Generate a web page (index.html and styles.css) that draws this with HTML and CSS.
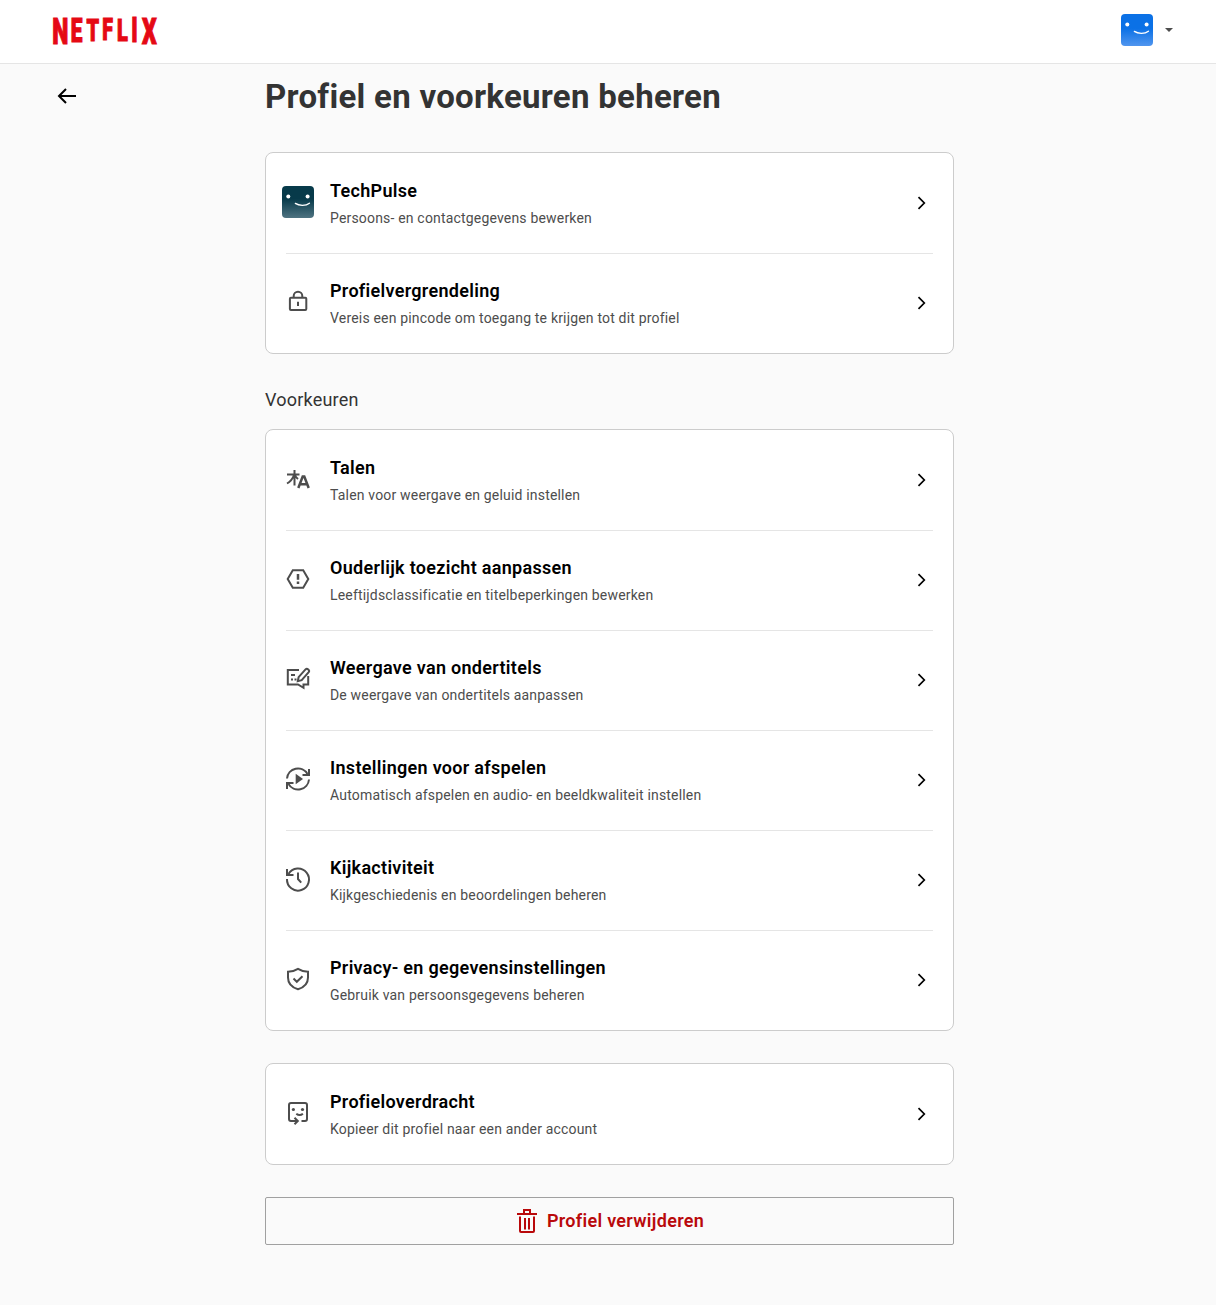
FILE: index.html
```html
<!DOCTYPE html>
<html lang="nl">
<head>
    <meta charset="UTF-8">
    <meta name="viewport" content="width=device-width, initial-scale=1.0">
    <title>Profiel en voorkeuren beheren</title>
    <link rel="stylesheet" href="styles.css">
</head>
<body>

<svg class="sprite" aria-hidden="true">
    <symbol id="chevron" viewBox="0 0 24 24">
        <path d="M9.5 6.2l5.8 5.8-5.8 5.8"/>
    </symbol>
    <symbol id="face" viewBox="0 0 32 32">
        <circle cx="6.3" cy="10.6" r="2" fill="#fff" stroke="none"/>
        <circle cx="25.6" cy="10.6" r="2" fill="#fff" stroke="none"/>
        <path d="M13.4 17.4c3.6 2.6 10.6 2.6 14-.2" fill="none" stroke="#fff" stroke-width="1.4" stroke-linecap="round"/>
    </symbol>
</svg>

<header class="header">
    <a class="logo" href="#" aria-label="Netflix">
        <svg width="106" height="30" viewBox="0 0 106 30">
            <text class="logo-text" transform="scale(.62 1)">
                <tspan x="0.6" y="28.2" font-size="37">N</tspan><tspan x="30.3" y="25.8" font-size="33.6">E</tspan><tspan x="55.5" y="24.7" font-size="32.2">T</tspan><tspan x="81.2" y="24.2" font-size="31.5">F</tspan><tspan x="105" y="24.7" font-size="32.2">L</tspan><tspan x="127.8" y="26.2" font-size="34.3">I</tspan><tspan x="145" y="28.2" font-size="37">X</tspan>
            </text>
        </svg>
    </a>
    <div class="account">
        <svg class="avatar avatar-blue"><use href="#face"/></svg>
        <span class="caret"></span>
    </div>
</header>

<main class="page">
    <a class="back" href="#" aria-label="Terug">
        <svg width="24" height="24" viewBox="0 0 24 24"><path d="M21 12H4M11 5l-7 7 7 7"/></svg>
    </a>

    <div class="content">
        <h1>Profiel en voorkeuren beheren</h1>

        <ul class="card">
            <li><a class="row" href="#">
                <svg class="avatar avatar-teal"><use href="#face"/></svg>
                <div class="text">
                    <h3>TechPulse</h3>
                    <p>Persoons- en contactgegevens bewerken</p>
                </div>
                <svg class="chevron"><use href="#chevron"/></svg>
            </a></li>
            <li><a class="row" href="#">
                <svg class="icon" viewBox="0 0 24 24">
                    <rect x="3.9" y="7.7" width="16.4" height="12.2" rx="1"/>
                    <path d="M7.7 7.7V6a4.3 4.3 0 0 1 8.6 0v1.7M12 11.7v4.4"/>
                </svg>
                <div class="text">
                    <h3>Profielvergrendeling</h3>
                    <p>Vereis een pincode om toegang te krijgen tot dit profiel</p>
                </div>
                <svg class="chevron"><use href="#chevron"/></svg>
            </a></li>
        </ul>

        <h2>Voorkeuren</h2>

        <ul class="card">
            <li><a class="row" href="#">
                <svg class="icon" viewBox="0 0 24 24">
                    <path d="M1 7.5h12.5M8.5 3v15.5M8 8c-1.2 3.6-3.6 6.6-7 8.5M9 8c.6 1.600 1.500 2.800 3 4"/>
                    <path d="M12.3 21l4.4-11.5h1.6L22.7 21M14 17.3h7" stroke-width="2.500"/>
                </svg>
                <div class="text">
                    <h3>Talen</h3>
                    <p>Talen voor weergave en geluid instellen</p>
                </div>
                <svg class="chevron"><use href="#chevron"/></svg>
            </a></li>
            <li><a class="row" href="#">
                <svg class="icon" viewBox="0 0 24 24">
                    <path d="M6.8 3.2h10.4L22.300 12l-5.1 8.800H6.800L1.700 12z"/>
                    <path d="M12 7v5.8M12 14.6V17" stroke-width="2.5"/>
                </svg>
                <div class="text">
                    <h3>Ouderlijk toezicht aanpassen</h3>
                    <p>Leeftijdsclassificatie en titelbeperkingen bewerken</p>
                </div>
                <svg class="chevron"><use href="#chevron"/></svg>
            </a></li>
            <li><a class="row" href="#">
                <svg class="icon" viewBox="0 0 24 24">
                    <path d="M13 3H1.800v14.500H12l5.500 3.300v-3.300h4.700V9"/>
                    <path d="M5 8h4M5 12.500h2M8.500 12.500h2"/>
                    <path d="M11.800 14.200l.8-4 6.900-7.800c1.700-1.600 4.600.9 3.200 2.800l-7 7.900z"/>
                </svg>
                <div class="text">
                    <h3>Weergave van ondertitels</h3>
                    <p>De weergave van ondertitels aanpassen</p>
                </div>
                <svg class="chevron"><use href="#chevron"/></svg>
            </a></li>
            <li><a class="row" href="#">
                <svg class="icon" viewBox="0 0 24 24">
                    <path d="M1 11.500A11 11 0 0 1 21.500 7M23 12.500A11 11 0 0 1 2.500 17"/>
                    <path d="M23 2v6h-6.500M1 22v-6h6.500"/>
                    <path class="solid" d="M9.700 6.800v10.400l7.300-5.200z"/>
                </svg>
                <div class="text">
                    <h3>Instellingen voor afspelen</h3>
                    <p>Automatisch afspelen en audio- en beeldkwaliteit instellen</p>
                </div>
                <svg class="chevron"><use href="#chevron"/></svg>
            </a></li>
            <li><a class="row" href="#">
                <svg class="icon" viewBox="0 0 24 24">
                    <path d="M2.500 7A11 11 0 1 1 1 12"/>
                    <path d="M1 2v6h6.500M12 5.500V12l3.200 3.600"/>
                </svg>
                <div class="text">
                    <h3>Kijkactiviteit</h3>
                    <p>Kijkgeschiedenis en beoordelingen beheren</p>
                </div>
                <svg class="chevron"><use href="#chevron"/></svg>
            </a></li>
            <li><a class="row" href="#">
                <svg class="icon" viewBox="0 0 24 24">
                    <path d="M12 1.900c3 1.900 6.300 2.800 10 2.900v5.700c0 5.600-3.800 9.900-10 11.700C5.800 20.400 2 16.100 2 10.500V4.800c3.700-.1 7-1 10-2.900z"/>
                    <path d="M7.500 11.500l3.300 3.300 5.700-5.600"/>
                </svg>
                <div class="text">
                    <h3>Privacy- en gegevensinstellingen</h3>
                    <p>Gebruik van persoonsgegevens beheren</p>
                </div>
                <svg class="chevron"><use href="#chevron"/></svg>
            </a></li>
        </ul>

        <ul class="card">
            <li><a class="row" href="#">
                <svg class="icon" viewBox="0 0 24 24">
                    <path d="M15.500 20H19a2 2 0 0 0 2-2V4a2 2 0 0 0-2-2H5a2 2 0 0 0-2 2v14a2 2 0 0 0 2 2h6.500M8.500 16.800l3.300 3.200-3.300 3.200"/>
                    <path d="M10.300 12.700c2 1.600 4.700 1.600 6.600 0"/>
                    <circle class="solid" cx="7.4" cy="8.5" r="1.6"/>
                    <circle class="solid" cx="16.5" cy="8.5" r="1.6"/>
                </svg>
                <div class="text">
                    <h3>Profieloverdracht</h3>
                    <p>Kopieer dit profiel naar een ander account</p>
                </div>
                <svg class="chevron"><use href="#chevron"/></svg>
            </a></li>
        </ul>

        <button class="btn-delete" type="button">
            <svg width="24" height="24" viewBox="0 0 24 24">
                <path d="M2 5h20M9 5V1h6v4M5 7.500V22a1 1 0 0 0 1 1h12a1 1 0 0 0 1-1V7.500M10 9v11.500M14 9v11.500"/>
            </svg>
            <span>Profiel verwijderen</span>
        </button>
    </div>
</main>

</body>
</html>
```
FILE: styles.css
```css
* {
    box-sizing: border-box;
}
body {
    margin: 0;
    min-height: 100vh;
    background-color: #fafafa;
    color: #000;
    font-family: Roboto, 'Liberation Sans', sans-serif;
}
h1, h2, h3, p, ul {
    margin: 0;
    padding: 0;
}
a {
    color: inherit;
    text-decoration: none;
}
.sprite {
    display: none;
}
.header {
    display: flex;
    justify-content: space-between;
    align-items: flex-start;
    height: 64px;
    padding: 14px 43px 0 52px;
    background-color: #fff;
    border-bottom: 1px solid #e5e5e5;
}
.logo {
    padding-top: 2px;
}
.logo svg {
    display: block;
    overflow: visible;
}
.logo-text {
    font-family: Roboto, sans-serif;
    font-weight: 900;
    fill: #e50914;
    stroke: #e50914;
    stroke-width: 1.2;
}
.account {
    display: flex;
    align-items: center;
    gap: 12px;
}
.avatar {
    width: 32px;
    height: 32px;
    border-radius: 4px;
}
.avatar-blue {
    background: linear-gradient(#0b71e6 45%, #5095ee);
}
.avatar-teal {
    background: linear-gradient(#073a4a 40%, #4f7381);
}
.caret {
    border: 4px solid transparent;
    border-top-color: #4d4d4d;
    border-bottom: 0;
}
.page {
    display: grid;
    grid-template-columns: 210px 689px;
    padding-left: 55px;
}
.back {
    padding-top: 20px;
}
.back svg {
    fill: none;
    stroke: #000;
    stroke-width: 2;
}
h1 {
    margin: 11px 0 33px;
    font-size: 33px;
    line-height: 44px;
    font-weight: 700;
    letter-spacing: 0.28px;
    color: #333;
}
h2 {
    margin: 32px 0 16px;
    font-size: 18px;
    line-height: 27px;
    font-weight: 400;
    letter-spacing: 0.2px;
    color: #333;
}
.card {
    list-style: none;
    background-color: #fff;
    border: 1px solid #ccc;
    border-radius: 8px;
}
.card + .card {
    margin-top: 32px;
}
.card li {
    margin: 0 20px;
}
.card li + li {
    box-shadow: inset 0 1px #e5e5e5;
}
.row {
    display: flex;
    align-items: center;
    height: 100px;
    margin-left: -4px;
}
.row .avatar,
.icon {
    margin-bottom: 2px;
}
.icon {
    width: 24px;
    height: 24px;
    margin-left: 4px;
    margin-right: 4px;
    overflow: visible;
    fill: none;
    stroke: #4d4d4d;
    stroke-width: 2;
}
.icon .solid {
    fill: #4d4d4d;
    stroke: none;
}
.text {
    flex: 1;
    margin-left: 16px;
}
h3 {
    font-size: 18px;
    line-height: 25px;
    font-weight: 600;
    letter-spacing: 0.3px;
}
.text p {
    margin-top: 5px;
    font-size: 14px;
    line-height: 21px;
    letter-spacing: 0.18px;
    color: #4d4d4d;
}
.chevron {
    width: 24px;
    height: 24px;
    fill: none;
    stroke: #000;
    stroke-width: 1.7;
}
.btn-delete {
    display: flex;
    justify-content: center;
    align-items: center;
    gap: 8px;
    width: 100%;
    height: 48px;
    margin-top: 32px;
    padding: 0 6px 2px;
    background: none;
    border: 1px solid #a0a0a0;
    border-radius: 2px;
    font: 600 18px Roboto, 'Liberation Sans', sans-serif;
    letter-spacing: 0.3px;
    color: #b9090b;
    cursor: pointer;
}
.btn-delete svg {
    margin-top: 2px;
    fill: none;
    stroke: currentColor;
    stroke-width: 2;
}
```
